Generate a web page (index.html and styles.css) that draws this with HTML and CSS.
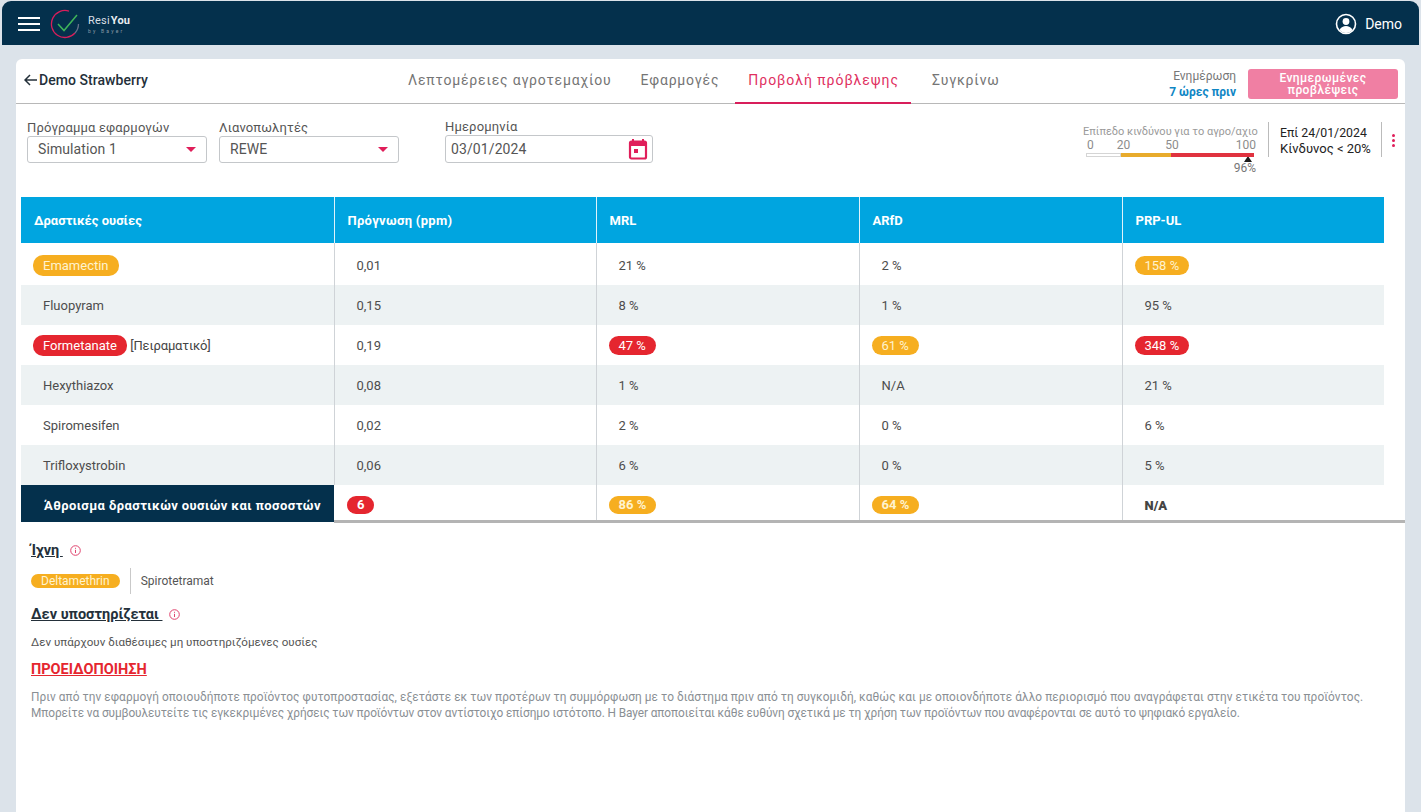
FILE: index.html
```html
<!DOCTYPE html>
<html lang="el">
<head>
<meta charset="utf-8">
<title>ResiYou</title>
<link rel="stylesheet" href="styles.css">
</head>
<body>
<header class="topbar">
  <div class="brand">
    <svg class="burger" width="22" height="14" viewBox="0 0 22 14"><path d="M0 1h22M0 7h22M0 13h22" stroke="#fff" stroke-width="2"/></svg>
    <svg class="logo" width="30" height="30" viewBox="0 0 30 30" fill="none"><path d="M19 2.100A13.500 13.500 0 1 0 25 24" stroke="#d81e5b" stroke-width="1.300"/><path d="M25 24A13.500 13.500 0 0 0 28.500 15" stroke="#66708a" stroke-width="1.300"/><path d="M8 15l6 6.500L27 6" stroke="#3fb55a" stroke-width="1.500"/></svg>
    <div class="brand-text">
      <div class="brand-name">Resi<b>You</b></div>
      <div class="brand-sub">by Bayer</div>
    </div>
  </div>
  <div class="user">
    <svg width="22" height="22" viewBox="0 0 22 22" fill="none"><circle cx="11" cy="11" r="9.500" stroke="#fff" stroke-width="1.600"/><circle cx="11" cy="8.500" r="3.400" fill="#fff"/><path d="M4.500 17c1.500-3 4-4 6.500-4s5 1 6.500 4c-1.800 2-4 3-6.500 3s-4.700-1-6.500-3z" fill="#fff"/></svg>
    <span>Demo</span>
  </div>
</header>

<main class="card">
  <nav class="tabsbar">
    <div class="back">
      <svg width="13" height="12" viewBox="0 0 13 12" fill="none"><path d="M6 1L1 6l5 5M1 6h12" stroke="#24303a" stroke-width="1.500"/></svg>
      <span>Demo Strawberry</span>
    </div>
    <div class="tabs">
      <a class="tab">Λεπτομέρειες αγροτεμαχίου</a>
      <a class="tab">Εφαρμογές</a>
      <a class="tab active">Προβολή πρόβλεψης</a>
      <a class="tab">Συγκρίνω</a>
    </div>
    <div class="update">
      <div class="update-text">
        <div>Ενημέρωση</div>
        <b>7 ώρες πριν</b>
      </div>
      <button class="update-btn">Ενημερωμένες προβλέψεις</button>
    </div>
  </nav>

  <section class="filters">
    <label class="field field-program">
      <span class="field-label">Πρόγραμμα εφαρμογών</span>
      <span class="select">Simulation 1<i class="caret"></i></span>
    </label>
    <label class="field field-retail">
      <span class="field-label">Λιανοπωλητές</span>
      <span class="select">REWE<i class="caret"></i></span>
    </label>
    <label class="field field-date">
      <span class="field-label">Ημερομηνία</span>
      <span class="select">03/01/2024
        <svg width="20" height="22" viewBox="0 0 20 22" fill="none"><path d="M5 1v3M15 1v3" stroke="#e01e5a" stroke-width="2"/><rect x="2" y="3.500" width="16" height="17" rx="1.500" stroke="#e01e5a" stroke-width="2.200"/><path d="M2 6h16" stroke="#e01e5a" stroke-width="4"/><rect x="6" y="11" width="4" height="4" fill="#e01e5a"/></svg>
      </span>
    </label>
    <div class="risk">
      <div class="gauge">
        <div class="gauge-title">Επίπεδο κινδύνου για το αγρο/αχιο</div>
        <div class="gauge-scale"><span class="s0">0</span><span class="s20">20</span><span class="s50">50</span><span class="s100">100</span></div>
        <div class="gauge-bar"><i class="g-low"></i><i class="g-mid"></i><i class="g-high"></i></div>
        <div class="gauge-mark"></div>
        <div class="gauge-val">96%</div>
      </div>
      <div class="risk-date">
        <div class="risk-when">Επί 24/01/2024</div>
        <div>Κίνδυνος &lt; 20%</div>
      </div>
      <div class="kebab"><i></i><i></i><i></i></div>
    </div>
  </section>

  <table class="data">
    <thead>
      <tr><th>Δραστικές ουσίες</th><th class="th-wide">Πρόγνωση (ppm)</th><th>MRL</th><th>ARfD</th><th>PRP-UL</th></tr>
    </thead>
    <tbody>
      <tr><td><span class="pill amber name">Emamectin</span></td><td>0,01</td><td>21 %</td><td>2 %</td><td><span class="pill amber">158 %</span></td></tr>
      <tr class="alt"><td><span class="plain">Fluopyram</span></td><td>0,15</td><td>8 %</td><td>1 %</td><td>95 %</td></tr>
      <tr><td><span class="pill red name">Formetanate</span> <span class="exp">[Πειραματικό]</span></td><td>0,19</td><td><span class="pill red">47 %</span></td><td><span class="pill amber">61 %</span></td><td><span class="pill red">348 %</span></td></tr>
      <tr class="alt"><td><span class="plain">Hexythiazox</span></td><td>0,08</td><td>1 %</td><td>N/A</td><td>21 %</td></tr>
      <tr><td><span class="plain">Spiromesifen</span></td><td>0,02</td><td>2 %</td><td>0 %</td><td>6 %</td></tr>
      <tr class="alt"><td><span class="plain">Trifloxystrobin</span></td><td>0,06</td><td>6 %</td><td>0 %</td><td>5 %</td></tr>
    </tbody>
    <tfoot>
      <tr><td>Άθροισμα δραστικών ουσιών και ποσοστών</td><td><span class="pill red">6</span></td><td><span class="pill amber">86 %</span></td><td><span class="pill amber">64 %</span></td><td><b class="na">N/A</b></td></tr>
    </tfoot>
  </table>
  <div class="table-rule"></div>

  <section class="notes">
    <h3 class="note-head"><span>Ίχνη </span><svg class="info" width="11" height="11" viewBox="0 0 11 11" fill="none"><circle cx="5.500" cy="5.500" r="4.800" stroke="#e0456f"/><path d="M5.500 2.800v1M5.500 4.800v3.200" stroke="#e0456f"/></svg></h3>
    <div class="traces"><span class="pill amber tiny">Deltamethrin</span><span class="trace-sep"></span><span class="trace-plain">Spirotetramat</span></div>
    <h3 class="note-head"><span>Δεν υποστηρίζεται </span><svg class="info" width="11" height="11" viewBox="0 0 11 11" fill="none"><circle cx="5.500" cy="5.500" r="4.800" stroke="#e0456f"/><path d="M5.500 2.800v1M5.500 4.800v3.200" stroke="#e0456f"/></svg></h3>
    <p class="none">Δεν υπάρχουν διαθέσιμες μη υποστηριζόμενες ουσίες</p>
    <h3 class="warning">ΠΡΟΕΙΔΟΠΟΙΗΣΗ</h3>
    <div class="disclaimer">
      <p class="line-a">Πριν από την εφαρμογή οποιουδήποτε προϊόντος φυτοπροστασίας, εξετάστε εκ των προτέρων τη συμμόρφωση με το διάστημα πριν από τη συγκομιδή, καθώς και με οποιονδήποτε άλλο περιορισμό που αναγράφεται στην ετικέτα του προϊόντος.</p>
      <p class="line-b">Μπορείτε να συμβουλευτείτε τις εγκεκριμένες χρήσεις των προϊόντων στον αντίστοιχο επίσημο ιστότοπο. Η Bayer αποποιείται κάθε ευθύνη σχετικά με τη χρήση των προϊόντων που αναφέρονται σε αυτό το ψηφιακό εργαλείο.</p>
    </div>
  </section>
</main>
</body>
</html>
```
FILE: styles.css
```css
* { box-sizing: border-box; }
html, body { height: 100%; }
body {
  margin: 0;
  height: 812px;
  overflow: hidden;
  background: #dce3ea;
  font-family: Roboto, "Noto Sans", sans-serif;
  color: #333;
  font-size: 13px;
}
.topbar {
  height: 44px;
  margin: 1px 2px 0;
  padding: 0 17px 0 16px;
  background: #04304c;
  border-radius: 9px 9px 0 0;
  display: flex;
  align-items: center;
  justify-content: space-between;
  color: #fff;
}
.brand { display: flex; align-items: center; }
.burger { margin-right: 10px; margin-top: 2px; }
.logo { margin-right: 8px; margin-top: 2px; }
.brand-text { line-height: 1; margin-top: 2px; }
.brand-name { font-size: 11px; letter-spacing: .2px; color: #d8dfe4; }
.brand-name b { color: #e8edf0; margin-left: 1px; }
.brand-sub { font-size: 5px; letter-spacing: 2.200px; color: #8b9ba6; margin-top: 3px; }
.user { display: flex; align-items: center; gap: 8px; font-size: 14px; margin-top: 2px; }

.card {
  margin: 14px 16px 0;
  height: 753px;
  background: #fff;
  border-radius: 6px 6px 0 0;
}
.tabsbar {
  height: 45px;
  border-bottom: 1px solid #b8b8b8;
  display: flex;
  align-items: stretch;
  padding: 0 7px 0 8px;
}
.back {
  width: 373px;
  display: flex;
  align-items: center;
  gap: 2px;
  font-size: 14px;
  font-weight: 500;
  color: #24303a;
  padding-bottom: 2px;
  letter-spacing: .05px;
}
.tabs { display: flex; gap: 7px; align-items: stretch; }
.tab {
  padding: 0 11px 3px;
  margin-bottom: -1px;
  display: flex;
  align-items: center;
  font-size: 14px;
  letter-spacing: .8px;
  color: #757575;
}
.tab.active {
  color: #e0305f;
  border-bottom: 2px solid #d81e5b;
  letter-spacing: .95px;
  padding: 0 12px 1px 13px;
  margin-left: -2px;
  margin-right: 3px;
}
.update { margin-left: auto; display: flex; align-items: center; gap: 12px; padding-top: 6px; }
.update-text { text-align: right; font-size: 12px; line-height: 16px; color: #777; }
.update-text b { color: #0f86c4; font-weight: 700; }
.update-btn {
  width: 150px;
  height: 30px;
  border: 0;
  padding: 0 20px;
  background: #f07fa3;
  border-radius: 3px;
  color: #fff;
  font: 500 12px/12px Roboto, sans-serif;
  letter-spacing: .4px;
}

.filters {
  height: 93px;
  padding: 17px 0 0 11px;
  display: flex;
  align-items: flex-start;
}
.field { display: flex; flex-direction: column; }
.field-label { font-size: 13px; line-height: 14px; color: #555; letter-spacing: .15px; }
.field-program { width: 180px; margin-right: 12px; }
.field-retail { width: 180px; margin-right: 46px; }
.field-date { width: 208px; margin-top: -1px; }
.select {
  height: 27px;
  margin-top: 1px;
  border: 1px solid #c4c7ca;
  border-radius: 3px;
  display: flex;
  align-items: center;
  justify-content: space-between;
  padding: 0 9px 1px 10px;
  font-size: 14px;
  color: #555;
  letter-spacing: .1px;
}
.field-date .select { height: 28px; padding: 0 4px 1px 5px; }
.caret { border: 5.500px solid transparent; border-top: 5px solid #e01e5a; border-bottom: 0; margin-right: 1px; }

.risk { margin-left: auto; display: flex; align-items: flex-start; padding-top: 5px; padding-right: 10px; }
.gauge { width: 172px; font-size: 11px; color: #9a9a9a; margin-right: 10px; }
.gauge-title { font-size: 11px; line-height: 11px; margin-left: -3px; white-space: nowrap; }
.gauge-scale { display: flex; font-size: 12px; line-height: 13px; margin-top: 2px; color: #8c8c8c; }
.gauge-scale .s0 { margin-left: 1px; }
.gauge-scale .s20 { margin-left: 23px; }
.gauge-scale .s50 { margin-left: 35px; }
.gauge-scale .s100 { margin-left: auto; margin-right: 2px; }
.gauge-bar { display: flex; height: 4px; margin-top: 1px; width: 168px; }
.gauge-bar i { display: block; height: 4px; }
.g-low { width: 35px; background: #fff; border: 1px solid #d5d5d5; }
.g-mid { width: 50px; background: #e8ab2c; }
.g-high { width: 83px; background: #e0323f; }
.gauge-mark { width: 0; margin: -1px 0 0 158px; border: 4px solid transparent; border-bottom: 6px solid #1c1c1c; border-top: 0; }
.gauge-val { font-size: 12px; line-height: 13px; text-align: right; color: #777; width: 170px; }
.risk-date {
  border-left: 1px solid #bbb;
  border-right: 1px solid #bbb;
  margin-top: -4px;
  padding: 4px 0 0 11px;
  height: 35px;
  width: 114px;
  font-size: 13px;
  line-height: 15px;
  color: #222;
  white-space: nowrap;
}
.risk-when { font-size: 12.300px; }
.kebab { display: flex; flex-direction: column; gap: 2px; margin-left: 10px; padding-top: 8px; }
.kebab i { width: 3px; height: 3px; border-radius: 50%; background: #e01e5a; }

.data {
  margin-left: 5px;
  width: 1363px;
  table-layout: fixed;
  border-collapse: collapse;
}
.data th {
  height: 46px;
  background: #00a5e0;
  color: #fff;
  text-align: left;
  padding: 0 0 0 13px;
  font-size: 13px;
  font-weight: 700;
  border-left: 1px solid #dff3fb;
}
.data th:first-child { width: 313px; padding-left: 13px; border-left: 0; }
.data th:nth-child(2) { width: 262px; }
.data th:nth-child(3) { width: 263px; }
.data th:nth-child(4) { width: 263px; }
.data .th-wide { letter-spacing: .3px; }
.data td {
  height: 40px;
  padding: 0 0 0 22px;
  font-size: 13px;
  color: #4d4d4d;
  border-left: 1px solid #cfd3d7;
  white-space: nowrap;
}
.data td:first-child { border-left: 0; padding-left: 12px; }
.data tbody tr:first-child td { height: 42px; padding-top: 2px; }
.data tr.alt td { background: #edf2f3; }
.pill {
  display: inline-block;
  height: 19px;
  line-height: 19px;
  padding: 0 10px;
  border-radius: 10px;
  margin-left: -10px;
  color: #fff;
  vertical-align: middle;
  font-size: 13px;
}
.pill.amber { background: #f6ae20; color: #fff3cf; }
.pill.red { background: #e5262f; color: #fff; }
.pill.name { margin-left: 0; padding: 0 10px; height: 21px; line-height: 21px; }
.plain { margin-left: 10px; }
.exp { color: #444; letter-spacing: -.15px; vertical-align: middle; }
.data tfoot td { height: 37px; font-weight: 700; padding-top: 3px; }
.data tfoot td:first-child {
  background: #04304c;
  color: #fff;
  padding-left: 23px;
  letter-spacing: .4px;
}
.data tfoot td:nth-child(2) { padding-left: 13px; border-left: 0; }
.data tfoot td:nth-child(2) .pill { margin-left: 0; padding: 0 10px; }
.data tfoot td .pill { height: 18px; line-height: 18px; }
.na { color: #444; }
.table-rule { height: 3px; background: #b4b4b4; margin: -2px 0 0 318px; position: relative; }

.notes { padding: 18px 0 0 15px; }
.note-head { margin: 0; display: flex; align-items: center; gap: 7px; font-size: 14.500px; font-weight: 700; color: #24303a; height: 18px; }
.note-head span { text-decoration: underline; white-space: pre; }
.traces { display: flex; align-items: center; height: 26px; margin: 9px 0 11px; }
.pill.tiny { height: 14px; line-height: 14px; margin-left: 0; padding: 0 10px; font-size: 12px; }
.trace-sep { width: 1px; height: 26px; background: #c9c9c9; margin: 0 10px; }
.trace-plain { font-size: 12px; color: #555; }
.none { margin: 12px 0 0; font-size: 11.600px; line-height: 14px; color: #555; }
.warning { margin: 13px 0 0; font-size: 14.500px; line-height: 16px; font-weight: 700; color: #e5262f; text-decoration: underline; }
.disclaimer { margin: 11px 0 0; font-size: 11.850px; line-height: 16px; color: #8a8f94; white-space: nowrap; }
.disclaimer p { margin: 0; }
.line-a { letter-spacing: .06px; }
.line-b { letter-spacing: -.085px; }
```
